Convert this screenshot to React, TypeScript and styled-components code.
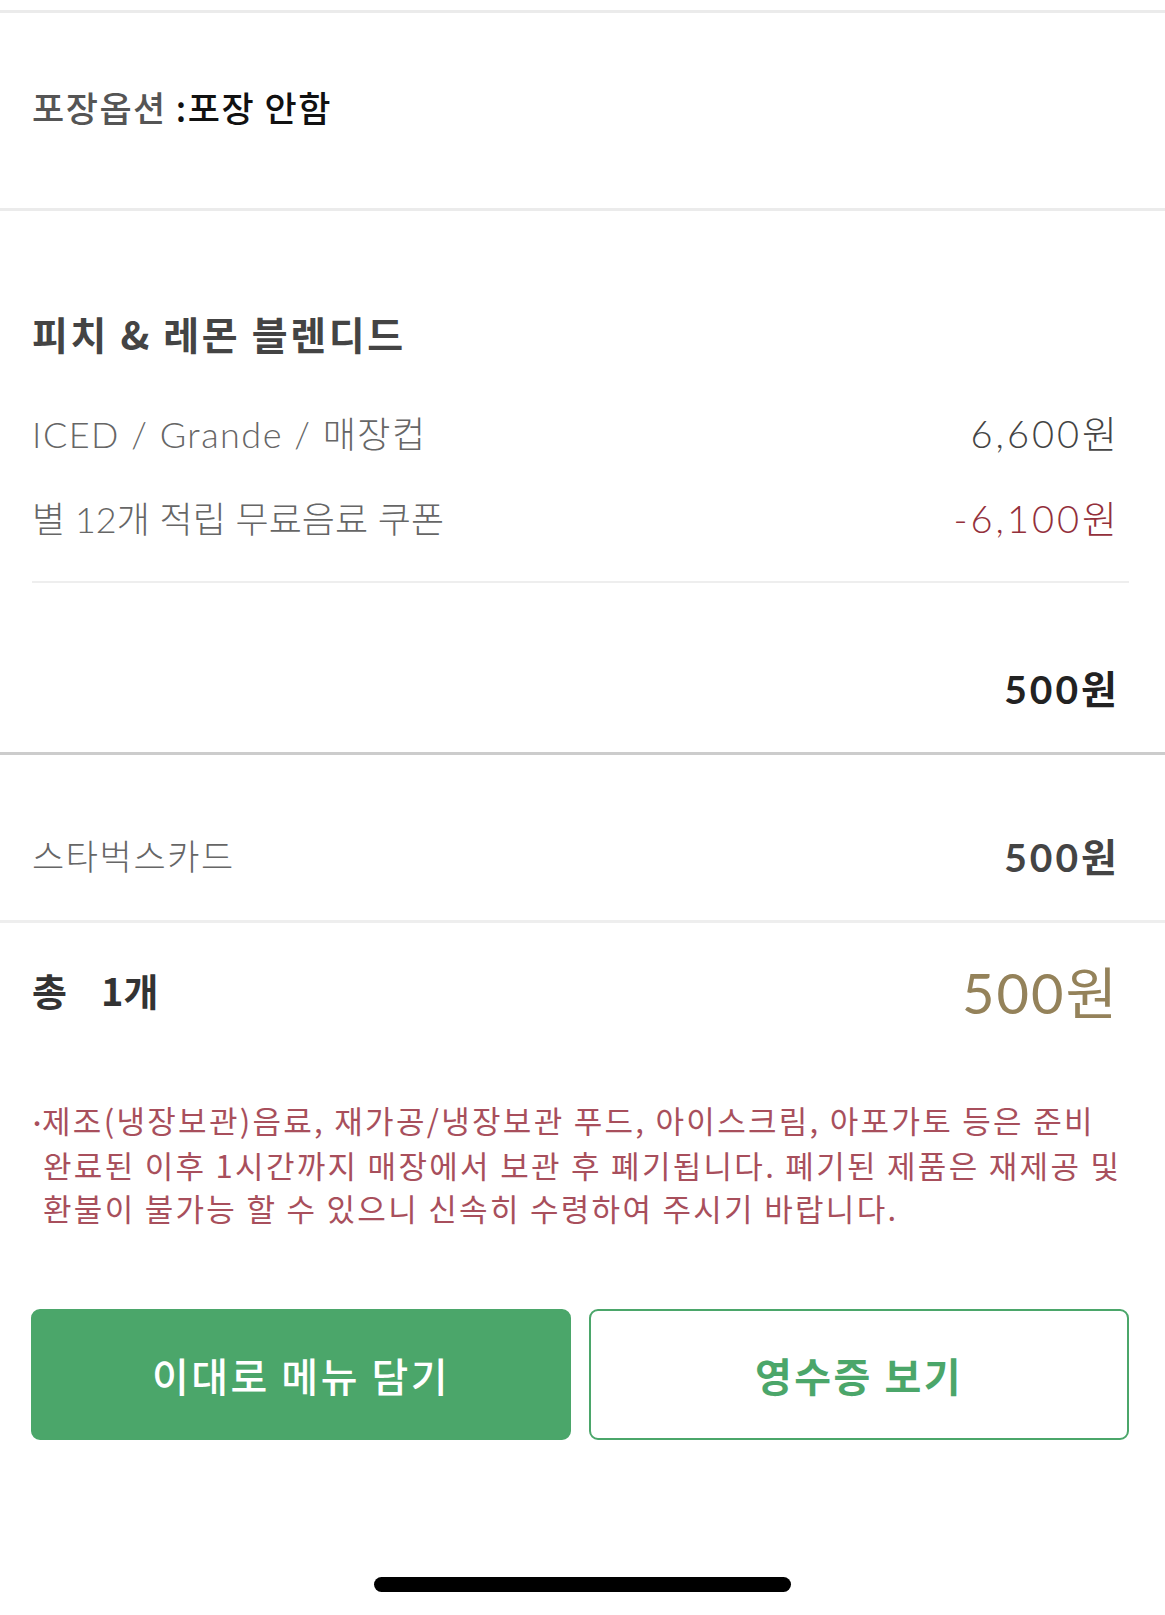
import React from "react";
import styled, { createGlobalStyle } from "styled-components";

const KR = `"Noto Sans CJK KR", "Noto Sans", sans-serif`;
const NUM = `Lato, "Noto Sans CJK KR", sans-serif`;

const GlobalStyle = createGlobalStyle`
  html, body { margin: 0; padding: 0; background: #ffffff; }
  * { box-sizing: border-box; }
`;

const Page = styled.div`
  width: 1165px;
  height: 1615px;
  display: flex;
  flex-direction: column;
  background: #ffffff;
  font-family: ${KR};
  overflow: hidden;
`;

const Rule = styled.div<{ $color: string; $h: number; $inset?: boolean; $top?: number }>`
  height: ${(p) => p.$h}px;
  background: ${(p) => p.$color};
  flex-shrink: 0;
  margin: ${(p) => `${p.$top ?? 0}px ${p.$inset ? "36px" : "0"} 0 ${p.$inset ? "32px" : "0"}`};
`;

const TopSpacer = styled.div`
  height: 10px;
`;

const PackRow = styled.div`
  height: 195px;
  display: flex;
  align-items: center;
  padding: 0 32px 8px;
  font-size: 35px;
  letter-spacing: 1.5px;
`;

const PackLabel = styled.span`
  color: #555555;
  font-weight: 500;
  margin-right: 9px;
`;

const PackValue = styled.span`
  color: #111111;
  font-weight: 500;
`;

const ItemSection = styled.section`
  display: flex;
  flex-direction: column;
  padding: 97px 0 0;
`;

const Title = styled.h2`
  margin: 0 36px 34px 32px;
  height: 50px;
  line-height: 50px;
  font-size: 39px;
  font-weight: 700;
  letter-spacing: 2.6px;
  color: #444444;
`;

const LineRow = styled.div`
  height: 85px;
  display: flex;
  align-items: center;
  justify-content: space-between;
  padding: 0 48px 6px 32px;
`;

const LineLabel = styled.span<{ $ls: number }>`
  font-family: ${NUM};
  font-size: 36px;
  font-weight: 300;
  color: #666666;
  letter-spacing: ${(p) => p.$ls}px;
`;

const Amount = styled.span<{ $color?: string; $weight?: number; $size?: number; $ls?: number }>`
  font-family: ${NUM};
  font-size: ${(p) => p.$size ?? 38}px;
  font-weight: ${(p) => p.$weight ?? 300};
  color: ${(p) => p.$color ?? "#444444"};
  letter-spacing: ${(p) => p.$ls ?? 3}px;
  margin-right: ${(p) => -(p.$ls ?? 3)}px;
`;

const SubtotalRow = styled.div`
  height: 169px;
  display: flex;
  align-items: center;
  justify-content: flex-end;
  padding: 45px 48px 6px 32px;
`;

const PayRow = styled.div`
  height: 165px;
  display: flex;
  align-items: center;
  justify-content: space-between;
  padding: 40px 48px 6px 32px;
`;

const PayLabel = styled.span`
  font-size: 35px;
  font-weight: 300;
  color: #666666;
  letter-spacing: 1.6px;
`;

const TotalRow = styled.div`
  height: 70px;
  margin-top: 34px;
  display: flex;
  align-items: center;
  justify-content: space-between;
  padding: 0 48px 6px 32px;
`;

const TotalCount = styled.span`
  font-size: 38px;
  font-weight: 700;
  color: #333333;
  display: flex;
  gap: 34px;
`;

const Notice = styled.p`
  margin: 71px 40px 0 32px;
  padding-left: 11px;
  text-indent: -10px;
  font-size: 31px;
  line-height: 43px;
  font-weight: 400;
  color: #a84f5c;
  letter-spacing: 2.3px;
  white-space: nowrap;
`;

const Bullet = styled.span`
  display: inline-block;
  width: 9px;
  text-indent: 0;
  letter-spacing: 0;
  font-family: Lato, sans-serif;
  font-weight: 400;
`;

const ButtonRow = styled.div`
  margin: 80px 36px 0 31px;
  display: grid;
  grid-template-columns: 1fr 1fr;
  gap: 18px;
`;

const Button = styled.button<{ $primary?: boolean }>`
  height: 131px;
  border-radius: 9px;
  border: 2px solid #4ba66a;
  background: ${(p) => (p.$primary ? "#4ba66a" : "#ffffff")};
  color: ${(p) => (p.$primary ? "#ffffff" : "#4ba66a")};
  font-family: ${KR};
  font-size: 40px;
  font-weight: ${(p) => (p.$primary ? 500 : 700)};
  letter-spacing: 2.5px;
  padding: 0;
  cursor: pointer;
`;

const HomeBar = styled.div`
  width: 417px;
  height: 15px;
  border-radius: 8px;
  background: #000000;
  margin: 137px auto 0;
`;

export default function App() {
  return (
    <>
      <GlobalStyle />
      <Page>
        <TopSpacer />
        <Rule $color="#ebebeb" $h={3} />
        <PackRow>
          <PackLabel>포장옵션</PackLabel>
          <PackValue>:포장 안함</PackValue>
        </PackRow>
        <Rule $color="#ebebeb" $h={3} />
        <ItemSection>
          <Title>피치 &amp; 레몬 블렌디드</Title>
          <LineRow>
            <LineLabel $ls={1.5}>ICED / Grande / 매장컵</LineLabel>
            <Amount>6,600원</Amount>
          </LineRow>
          <LineRow>
            <LineLabel $ls={0}>별 12개 적립 무료음료 쿠폰</LineLabel>
            <Amount $color="#93303b">-6,100원</Amount>
          </LineRow>
          <Rule $color="#eeeeee" $h={2} $inset $top={19} />
          <SubtotalRow>
            <Amount $weight={700} $color="#222222" $size={39}>
              500원
            </Amount>
          </SubtotalRow>
        </ItemSection>
        <Rule $color="#cccccc" $h={3} />
        <PayRow>
          <PayLabel>스타벅스카드</PayLabel>
          <Amount $weight={700} $color="#444444" $size={39}>
            500원
          </Amount>
        </PayRow>
        <Rule $color="#eeeeee" $h={3} />
        <TotalRow>
          <TotalCount>
            <span>총</span>
            <span>1개</span>
          </TotalCount>
          <Amount $weight={400} $color="#94825a" $size={56} $ls={2}>
            500원
          </Amount>
        </TotalRow>
        <Notice>
          <Bullet>·</Bullet>제조(냉장보관)음료, 재가공/냉장보관 푸드, 아이스크림, 아포가토 등은 준비
          <br />
          완료된 이후 1시간까지 매장에서 보관 후 폐기됩니다. 폐기된 제품은 재제공 및
          <br />
          환불이 불가능 할 수 있으니 신속히 수령하여 주시기 바랍니다.
        </Notice>
        <ButtonRow>
          <Button $primary>이대로 메뉴 담기</Button>
          <Button>영수증 보기</Button>
        </ButtonRow>
        <HomeBar />
      </Page>
    </>
  );
}
